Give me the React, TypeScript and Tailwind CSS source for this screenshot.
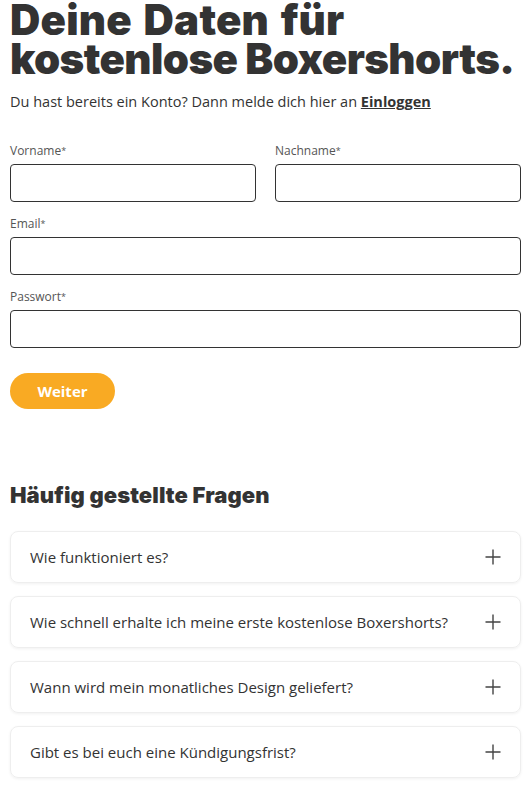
const faqs = [
  "Wie funktioniert es?",
  "Wie schnell erhalte ich meine erste kostenlose Boxershorts?",
  "Wann wird mein monatliches Design geliefert?",
  "Gibt es bei euch eine Kündigungsfrist?",
];

const Field = ({ label }: { label: string }) => (
  <label className="flex flex-col">
    <span className="text-[12px] leading-[16px] text-[#555]">
      {label}
      <span className="text-[9px] align-top text-[#555]">*</span>
    </span>
    <input className="mt-[5px] h-[38px] w-full rounded-[4px] border border-[#333] bg-white px-3 outline-none" />
  </label>
);

const PlusIcon = () => (
  <svg width="16" height="16" viewBox="0 0 16 16" className="shrink-0">
    <path d="M8 0.5v15M0.5 8h15" stroke="#444" strokeWidth="1.4" fill="none" />
  </svg>
);

export default function App() {
  return (
    <div className="min-h-screen bg-white pl-[10px] pr-[8px] pb-8 font-['Open_Sans',sans-serif] text-[#333]">
      <h1 className="whitespace-nowrap font-['Inter',sans-serif] text-[42px] font-black leading-[39px] tracking-[-0.6px] text-[#333]">
        <span className="tracking-[0.2px] [word-spacing:3px]">Deine Daten für</span>
        <br />
        kostenlose Boxershorts.
      </h1>
      <p className="mt-[14px] text-[14.5px] leading-[20px]">
        Du hast bereits ein Konto? Dann melde dich hier an{" "}
        <a href="#" className="font-bold underline">Einloggen</a>
      </p>

      <form className="mt-[31px] flex flex-col gap-[14px]">
        <div className="grid grid-cols-2 gap-[19px]">
          <Field label="Vorname" />
          <Field label="Nachname" />
        </div>
        <Field label="Email" />
        <Field label="Passwort" />
        <div className="mt-[11px]">
          <button
            type="button"
            className="h-[36px] w-[105px] rounded-full bg-[#f9aa23] text-[15px] font-bold text-white"
          >
            Weiter
          </button>
        </div>
      </form>

      <h2 className="mt-[72px] font-['Inter',sans-serif] text-[22px] font-black leading-[28px] tracking-[0.1px] text-[#333]">
        Häufig gestellte Fragen
      </h2>

      <div className="mt-[22px] flex flex-col gap-[13px]">
        {faqs.map((q) => (
          <div
            key={q}
            className="flex h-[52px] items-center justify-between rounded-[8px] border border-[#eee] pl-[19px] pr-[19px] shadow-[0_1px_3px_rgba(0,0,0,0.06)]"
          >
            <span className="text-[15px]">{q}</span>
            <PlusIcon />
          </div>
        ))}
      </div>
    </div>
  );
}
